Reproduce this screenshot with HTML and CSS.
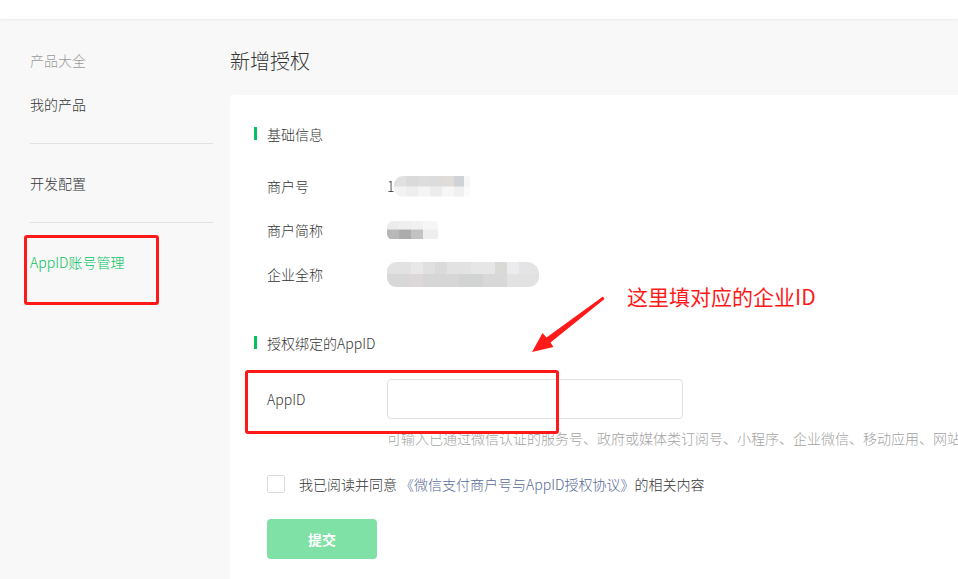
FILE: index.html
```html
<!DOCTYPE html>
<html lang="zh-CN">
<head>
<meta charset="utf-8">
<title>新增授权</title>
<link rel="stylesheet" href="styles.css">
</head>
<body>
<header class="topbar"></header>
<div class="main">
  <aside class="sidebar">
    <div class="nav-title">产品大全</div>
    <div class="nav-item">我的产品</div>
    <div class="divider"></div>
    <div class="nav-item">开发配置</div>
    <div class="divider"></div>
    <div class="nav-item active">AppID账号管理</div>
  </aside>
  <section class="content">
    <h1 class="page-title">新增授权</h1>
    <div class="card">
      <div class="sec-head">基础信息</div>
      <div class="row"><span class="label">商户号</span><span class="value"><span class="one">1</span><span class="mosaic b1"></span></span></div>
      <div class="row"><span class="label">商户简称</span><span class="value"><span class="mosaic b2"></span></span></div>
      <div class="row"><span class="label">企业全称</span><span class="value"><span class="mosaic b3"></span></span></div>

      <div class="sec-head sec2">授权绑定的AppID</div>
      <div class="form-row"><span class="label">AppID</span><input class="input" type="text"></div>
      <div class="help">可输入已通过微信认证的服务号、政府或媒体类订阅号、小程序、企业微信、移动应用、网站应用</div>
      <div class="agree"><span class="checkbox"></span><span>我已阅读并同意 <a class="link">《微信支付商户号与AppID授权协议》</a>的相关内容</span></div>
      <button class="submit">提交</button>
    </div>
  </section>
</div>

<div class="mark mark-nav"></div>
<div class="mark mark-appid"></div>
<div class="note">这里填对应的企业ID</div>
<svg class="arrow" width="958" height="579" viewBox="0 0 958 579">
  <polygon fill="#ff1a1a" points="532,352 542.5,333 546.5,337.5 603,296.5 604.5,299 550.5,342.5 553.5,347"/>
</svg>
</body>
</html>
```

FILE: styles.css
```css
* { box-sizing: border-box; }
html, body { margin: 0; padding: 0; }
body {
  width: 958px;
  height: 579px;
  overflow: hidden;
  background: #f8f8f8;
  font-family: "Noto Sans CJK SC", "Microsoft YaHei", sans-serif;
  font-size: 14px;
  font-weight: 300;
  color: #353535;
  position: relative;
}
.topbar {
  height: 19px;
  background: #fff;
  box-shadow: 0 1px 2px rgba(0,0,0,0.06);
  position: relative;
  z-index: 1;
}
.main {
  display: flex;
  height: 560px;
}
.sidebar {
  width: 230px;
  flex: none;
  padding-left: 30px;
  padding-right: 17px;
}
.nav-title {
  margin-top: 32px;
  line-height: 18px;
  color: #9a9a9a;
}
.nav-item {
  margin-top: 26px;
  line-height: 18px;
  color: #353535;
}
.divider + .nav-item { margin-top: 30px; }
.divider {
  margin-top: 30px;
  height: 1px;
  background: #e2e2e2;
}
.nav-item.active { color: #07c160; }

.content {
  flex: 1;
  min-width: 0;
  display: flex;
  flex-direction: column;
}
.page-title {
  margin: 28px 0 0;
  font-size: 20px;
  font-weight: 300;
  line-height: 28px;
  color: #353535;
}
.card {
  margin-top: 20px;
  flex: 1;
  background: #fff;
  border-radius: 4px 0 0 0;
  padding: 29px 0 0 24px;
  overflow: hidden;
}
.sec-head {
  line-height: 18px;
  border-left: 3px solid #07c160;
  padding-left: 10px;
  height: 13px;
  display: flex;
  align-items: center;
  margin-top: 3px;
  margin-bottom: 24px;
}
.sec2 { margin-top: 40px; margin-bottom: 30px; }
.row {
  height: 44px;
  display: flex;
  align-items: center;
  padding-left: 13px;
}
.label {
  width: 120px;
  flex: none;
}
.value {
  display: flex;
  align-items: center;
}
.one { color: #353535; }
.mosaic {
  display: inline-block;
  filter: blur(0.6px);
}
.b1 {
  width: 76px;
  height: 21px;
  margin-left: -1px;
  border-radius: 9px 3px 3px 9px;
  background:
    linear-gradient(90deg, #e0e0e0 0 12px, #dadada 12px 24px, #dddddd 24px 36px, #dcdcdc 36px 48px, #e0dcda 48px 60px, #cfd3d7 60px 70px, #f6f6f6 70px) top / 100% 50% no-repeat,
    linear-gradient(90deg, #f2f2f2 0 12px, #eeeeee 12px 24px, #f4f4f4 24px 36px, #ececec 36px 48px, #f6f6f6 48px 60px, #f0f0f0 60px 70px, #fbfbfb 70px) bottom / 100% 50% no-repeat;
}
.b2 {
  width: 51px;
  height: 19px;
  border-radius: 6px 3px 3px 6px;
  background:
    linear-gradient(90deg, #ececec 0 12px, #efefef 12px 24px, #f1f1f1 24px 36px, #f6f6f6 36px) top / 100% 45% no-repeat,
    linear-gradient(90deg, #b8b8b8 0 12px, #acacac 12px 24px, #c2c2c2 24px 36px, #eeeeee 36px) bottom / 100% 55% no-repeat;
}
.b3 {
  width: 152px;
  height: 25px;
  border-radius: 9px 12px 10px 9px;
  background:
    linear-gradient(90deg, #e2e2e2 0 24px, #e8e8e8 24px 36px, #e0e0e0 36px 48px, #dadada 48px 60px, #e2e2e2 60px 84px, #e6e6e6 84px 108px, #d9d9d6 108px 120px, #ececef 120px 132px, #e4e4e4 132px) top / 100% 48% no-repeat,
    linear-gradient(90deg, #d8d8d8 0 24px, #dcd8d8 24px 36px, #d6d6d6 36px 72px, #d2d4d4 72px 96px, #d8d8d8 96px 120px, #e2e2e2 120px) bottom / 100% 52% no-repeat;
}
.form-row {
  display: flex;
  align-items: center;
  padding-left: 13px;
  height: 40px;
}
.input {
  width: 296px;
  height: 40px;
  border: 1px solid #e0e0e0;
  border-radius: 4px;
  background: #fff;
  outline: none;
  font: inherit;
}
.help {
  margin-top: 10px;
  padding-left: 133px;
  line-height: 18px;
  color: #a3a3a3;
  white-space: nowrap;
}
.agree {
  margin-top: 28px;
  padding-left: 13px;
  display: flex;
  align-items: center;
  height: 18px;
  line-height: 18px;
  white-space: nowrap;
}
.checkbox {
  width: 18px;
  height: 18px;
  border: 1px solid #dcdcdc;
  border-radius: 2px;
  margin-right: 14px;
  flex: none;
}
.link { color: #576b95; }
.submit {
  display: block;
  margin: 26px 0 0 13px;
  width: 110px;
  height: 40px;
  border: none;
  border-radius: 4px;
  background: #80e1a7;
  color: #fff;
  font: inherit;
  font-size: 14px;
  font-weight: bold;
}

.mark {
  position: absolute;
  border: 3px solid #ff1a1a;
  border-radius: 3px;
}
.mark-nav { left: 24px; top: 235px; width: 135px; height: 70px; }
.mark-appid { left: 245px; top: 370px; width: 314px; height: 64px; }
.note {
  position: absolute;
  left: 627px;
  top: 282px;
  font-size: 21px;
  font-weight: 400;
  line-height: 28px;
  color: #ff1a1a;
}
.arrow {
  position: absolute;
  left: 0;
  top: 0;
  pointer-events: none;
}
```
